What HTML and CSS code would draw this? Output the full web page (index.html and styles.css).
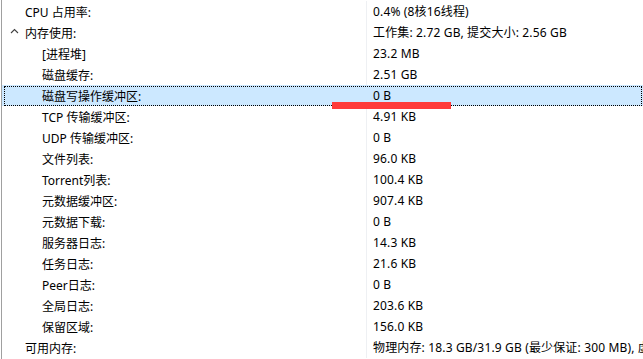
FILE: index.html
```html
<!DOCTYPE html>
<html lang="zh-CN">
<head>
<meta charset="utf-8">
<link rel="stylesheet" href="styles.css">
</head>
<body>
<div class="list">
  <div class="row"><div class="name top">CPU 占用率:</div><div class="val">0.4% (8核16线程)</div></div>
  <div class="row"><div class="name top"><svg class="chev" width="9" height="6" viewBox="0 0 9 6"><polyline points="1,5 4.5,1.5 8,5" fill="none" stroke="#404040" stroke-width="1.1"/></svg>内存使用:</div><div class="val">工作集: 2.72 GB, 提交大小: 2.56 GB</div></div>
  <div class="row"><div class="name child">[进程堆]</div><div class="val">23.2 MB</div></div>
  <div class="row"><div class="name child">磁盘缓存:</div><div class="val">2.51 GB</div></div>
  <div class="row selected"><div class="name child">磁盘写操作缓冲区:</div><div class="val">0 B</div><div class="mark"></div></div>
  <div class="row"><div class="name child">TCP 传输缓冲区:</div><div class="val">4.91 KB</div></div>
  <div class="row"><div class="name child">UDP 传输缓冲区:</div><div class="val">0 B</div></div>
  <div class="row"><div class="name child">文件列表:</div><div class="val">96.0 KB</div></div>
  <div class="row"><div class="name child">Torrent列表:</div><div class="val">100.4 KB</div></div>
  <div class="row"><div class="name child">元数据缓冲区:</div><div class="val">907.4 KB</div></div>
  <div class="row"><div class="name child">元数据下载:</div><div class="val">0 B</div></div>
  <div class="row"><div class="name child">服务器日志:</div><div class="val">14.3 KB</div></div>
  <div class="row"><div class="name child">任务日志:</div><div class="val">21.6 KB</div></div>
  <div class="row"><div class="name child">Peer日志:</div><div class="val">0 B</div></div>
  <div class="row"><div class="name child">全局日志:</div><div class="val">203.6 KB</div></div>
  <div class="row"><div class="name child">保留区域:</div><div class="val">156.0 KB</div></div>
  <div class="row"><div class="name top">可用内存:</div><div class="val">物理内存: 18.3 GB/31.9 GB (最少保证: 300 MB), 虚拟内存: 12.4 GB</div></div>
</div>
</body>
</html>
```
FILE: styles.css
```css
html, body {
  margin: 0;
  padding: 0;
  background: #ffffff;
  overflow: hidden;
}
body {
  width: 643px;
  height: 359px;
  font-family: "Noto Sans", "Noto Sans CJK SC", sans-serif;
  font-size: 12px;
  color: #000;
}
.list {
  margin-left: 1px;
  border-left: 1px solid #a0a0a0;
  height: 359px;
  padding-top: 1px;
  box-sizing: border-box;
}
.row {
  position: relative;
  display: flex;
  height: 21px;
  align-items: center;
  white-space: nowrap;
}
.name {
  width: 364px;
  flex: none;
  display: flex;
  align-items: center;
  box-sizing: border-box;
  height: 21px;
}
.name.top { padding-left: 23px; }
.name.child { padding-left: 40px; }
.chev {
  margin-left: -15px;
  margin-right: 6px;
  margin-top: -3px;
}
.val {
  flex: 1;
  height: 21px;
  line-height: 21px;
  padding-left: 6px;
  border-left: 1px solid #eef0f3;
  overflow: hidden;
  letter-spacing: 0.15px;
}
.selected {
  background: #cce8ff;
}
.selected .val { border-left-color: transparent; }
.selected::after {
  content: "";
  position: absolute;
  left: 2px;
  right: 1px;
  top: 1px;
  bottom: 0px;
  border: 1px dotted #000;
  pointer-events: none;
}
.mark {
  position: absolute;
  left: 330px;
  top: 17px;
  width: 119px;
  height: 7px;
  background: #ff3a3a;
  z-index: 2;
}
```
